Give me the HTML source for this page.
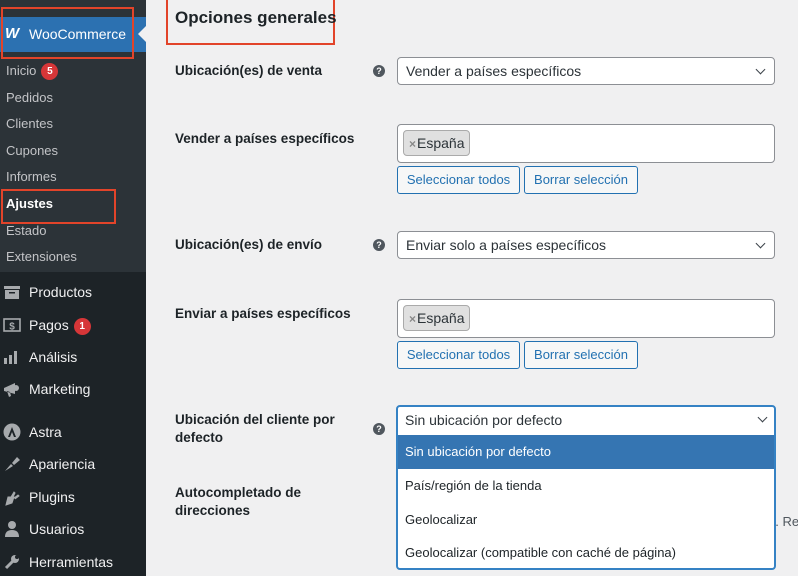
<!DOCTYPE html>
<html><head><meta charset="utf-8"><style>
*{box-sizing:border-box;margin:0;padding:0}
body{width:798px;height:576px;overflow:hidden;background:#f0f0f1;font-family:"Liberation Sans",Arial,sans-serif;position:relative;color:#1d2327}
.sb{position:absolute;left:0;top:0;width:146px;height:576px;background:#1d2327}
.sub{position:absolute;left:0;top:0;width:146px;height:272px;background:#2c3338}
.woo{position:absolute;left:0;top:17px;width:146px;height:35px;background:#2c71b1;color:#fff;font-size:14px}
.arrow{position:absolute;left:138px;top:26px;width:0;height:0;border-top:8px solid transparent;border-bottom:8px solid transparent;border-right:8px solid #f0f0f1}
.si{position:absolute;left:6px;font-size:13px;color:#c3c4c7}
.mi{position:absolute;left:29px;font-size:14px;color:#f0f0f1}
.ic{position:absolute;left:3px;width:18px;height:18px}
.badge{display:inline-block;width:17px;height:17px;border-radius:50%;background:#d63638;color:#fff;font-size:10px;font-weight:bold;text-align:center;line-height:17px;margin-left:5px;vertical-align:1px}
.red{position:absolute;border:2.5px solid #e2442a}
.lbl{position:absolute;left:175px;font-size:13.5px;font-weight:bold;color:#1d2327;line-height:18px}
.help{position:absolute;left:373px;width:12px;height:12px;border-radius:50%;background:#50575e;color:#fff;font-size:9px;font-weight:bold;text-align:center;line-height:12px}
.sel{position:absolute;left:397px;width:378px;height:28px;background:#fff;border:1px solid #8c8f94;border-radius:4px;font-size:14px;padding-left:8px;line-height:26px;color:#2c3338}
.chev{position:absolute;right:10px;top:8px;width:7px;height:7px;border-right:1.5px solid #3c434a;border-bottom:1.5px solid #3c434a;transform:rotate(45deg)}
.multi{position:absolute;left:397px;width:378px;height:39px;background:#fff;border:1px solid #8c8f94;border-radius:4px}
.tag{position:absolute;left:5px;top:5px;height:26px;width:67px;background:#e0e0e0;border:1px solid #aaa;border-radius:4px;font-size:14px;line-height:24px;padding-left:5px;color:#2c3338}
.tag b{color:#888;font-size:12px;margin-right:1px}
.btn{position:absolute;height:28px;background:#f6f7f7;border:1px solid #2271b1;border-radius:3px;color:#2271b1;font-size:13px;line-height:26px;text-align:center}
.dd{position:absolute;left:396px;top:405px;width:380px;height:165px;border:2px solid #3582c4;border-radius:4px;background:#fff;overflow:hidden;z-index:2}
.opt{position:absolute;left:0;width:376px;height:34px;font-size:13px;padding-left:7px;line-height:34px;color:#1d2327}
</style></head><body>
<div class="sb">
<div class="sub"></div>
<div class="woo"><span style="position:absolute;left:5px;top:8px;font-weight:900;font-style:italic;font-size:15px">W</span><span style="position:absolute;left:29px;top:9px">WooCommerce</span></div>
<div class="arrow"></div>
<div class="si" style="top:63px">Inicio<span class="badge">5</span></div>
<div class="si" style="top:90px">Pedidos</div>
<div class="si" style="top:116px">Clientes</div>
<div class="si" style="top:143px">Cupones</div>
<div class="si" style="top:169px">Informes</div>
<div class="si" style="top:196px;color:#fff;font-weight:bold">Ajustes</div>
<div class="si" style="top:223px">Estado</div>
<div class="si" style="top:249px">Extensiones</div>
<svg class="ic" style="top:283px" viewBox="0 0 18 18"><rect x="1" y="3" width="16" height="3" fill="#a7aaad"/><rect x="2" y="7" width="14" height="9" fill="#a7aaad"/><rect x="6" y="9" width="6" height="1.5" fill="#1d2327"/></svg>
<div class="mi" style="top:284px">Productos</div>
<svg class="ic" style="top:316px" viewBox="0 0 18 18"><rect x="1" y="3" width="16" height="12" fill="none" stroke="#a7aaad" stroke-width="1.6"/><text x="9" y="13.5" font-size="10" font-weight="bold" fill="#a7aaad" text-anchor="middle" font-family="Liberation Sans">$</text></svg>
<div class="mi" style="top:317px">Pagos<span class="badge">1</span></div>
<svg class="ic" style="top:348px" viewBox="0 0 18 18"><rect x="1" y="10" width="3" height="6" fill="#a7aaad"/><rect x="6" y="7" width="3" height="9" fill="#a7aaad"/><rect x="11" y="3" width="3" height="13" fill="#a7aaad"/></svg>
<div class="mi" style="top:349px">Análisis</div>
<svg class="ic" style="top:380px" viewBox="0 0 18 18"><path d="M1 8 L12 3 L12 14 L1 11Z M4 11 L6 17 L8 16 L7 12Z" fill="#a7aaad"/><circle cx="13" cy="8" r="3" fill="#a7aaad"/></svg>
<div class="mi" style="top:381px">Marketing</div>
<svg class="ic" style="top:423px" viewBox="0 0 18 18"><circle cx="9" cy="9" r="8.5" fill="#a7aaad"/><path d="M9 4 L5 14 L7 14 L9 9 L11 14 L13 14Z" fill="#1d2327"/></svg>
<div class="mi" style="top:424px">Astra</div>
<svg class="ic" style="top:455px" viewBox="0 0 18 18"><path d="M2 16 L8 9 L10 11Z M9 8 L14 2 L17 5 L11 10Z" fill="#a7aaad"/></svg>
<div class="mi" style="top:456px">Apariencia</div>
<svg class="ic" style="top:488px" viewBox="0 0 18 18"><path d="M3 17 L5 9 L11 9 L9 15Z M8 9 L11 4 L12 5 L10 9 M11 10 L15 7 L16 8 L12 11" fill="#a7aaad" stroke="#a7aaad"/></svg>
<div class="mi" style="top:489px">Plugins</div>
<svg class="ic" style="top:520px" viewBox="0 0 18 18"><circle cx="9" cy="5" r="4" fill="#a7aaad"/><path d="M2 17 Q2 10 9 10 Q16 10 16 17Z" fill="#a7aaad"/></svg>
<div class="mi" style="top:521px">Usuarios</div>
<svg class="ic" style="top:553px" viewBox="0 0 18 18"><path d="M3 15 L10 8" stroke="#a7aaad" stroke-width="3"/><circle cx="12" cy="6" r="4" fill="#a7aaad"/><circle cx="14" cy="4" r="2" fill="#1d2327"/></svg>
<div class="mi" style="top:554px">Herramientas</div>
</div>
<div class="red" style="left:1px;top:7px;width:133px;height:52px"></div>
<div class="red" style="left:1px;top:189px;width:115px;height:35px"></div>
<div class="red" style="left:166px;top:-3px;width:169px;height:48px"></div>
<div style="position:absolute;left:175px;top:8px;font-size:17px;font-weight:bold;color:#1d2327">Opciones generales</div>

<div class="lbl" style="top:62px">Ubicación(es) de venta</div>
<div class="help" style="top:65px;left:373px">?</div>
<div class="sel" style="top:57px">Vender a países específicos<div class="chev"></div></div>

<div class="lbl" style="top:130px">Vender a países específicos</div>
<div class="multi" style="top:124px"><div class="tag"><b>×</b>España</div></div>
<div class="btn" style="left:397px;top:166px;width:123px">Seleccionar todos</div>
<div class="btn" style="left:524px;top:166px;width:114px">Borrar selección</div>

<div class="lbl" style="top:236px">Ubicación(es) de envío</div>
<div class="help" style="top:239px">?</div>
<div class="sel" style="top:231px">Enviar solo a países específicos<div class="chev"></div></div>

<div class="lbl" style="top:305px">Enviar a países específicos</div>
<div class="multi" style="top:299px"><div class="tag"><b>×</b>España</div></div>
<div class="btn" style="left:397px;top:341px;width:123px">Seleccionar todos</div>
<div class="btn" style="left:524px;top:341px;width:114px">Borrar selección</div>

<div class="lbl" style="top:411px">Ubicación del cliente por<br>defecto</div>
<div class="help" style="top:423px">?</div>

<div class="lbl" style="top:484px">Autocompletado de<br>direcciones</div>
<div style="position:absolute;left:768px;top:514px;font-size:13px;color:#50575e;z-index:1;white-space:nowrap">n. Re</div>

<div class="dd">
<div class="opt" style="top:0;height:28px;line-height:26px;font-size:14px;color:#2c3338">Sin ubicación por defecto<div class="chev" style="right:8px;top:7px"></div></div>
<div class="opt" style="top:28px;background:#3575b2;color:#fff">Sin ubicación por defecto</div>
<div class="opt" style="top:62px">País/región de la tienda</div>
<div class="opt" style="top:96px">Geolocalizar</div>
<div class="opt" style="top:129px">Geolocalizar (compatible con caché de página)</div>
</div>
</body></html>
